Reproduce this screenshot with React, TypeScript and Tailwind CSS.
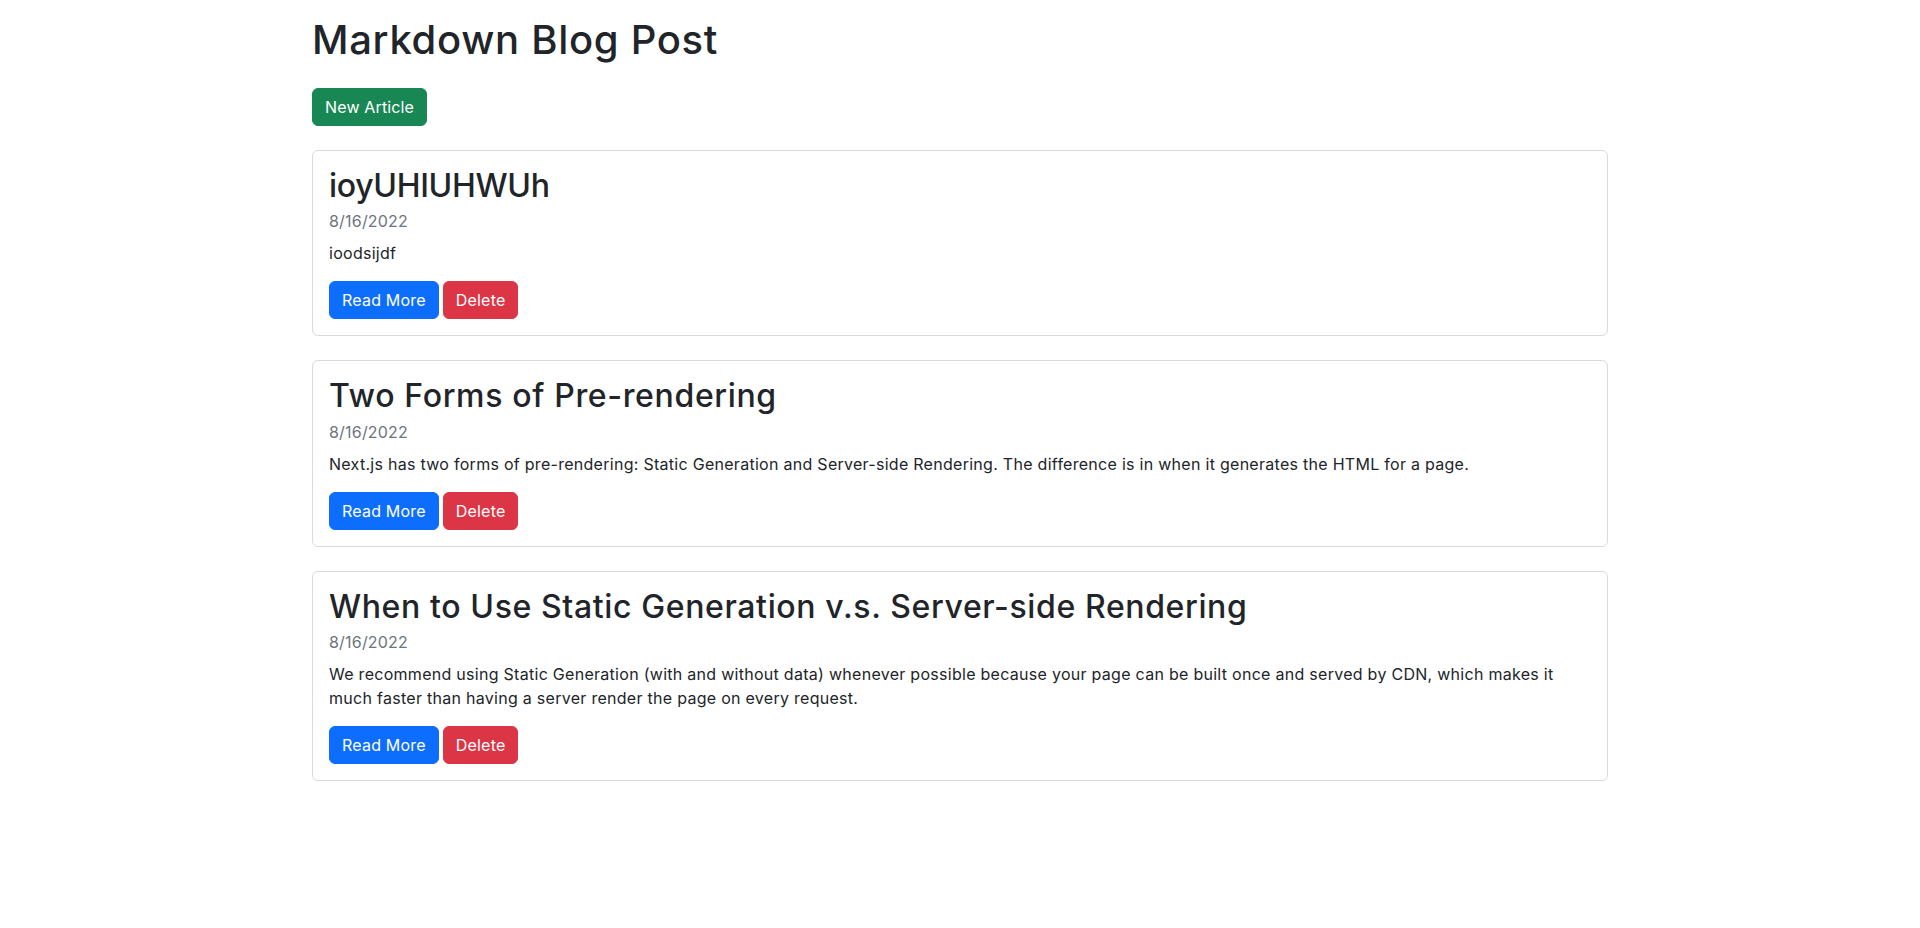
import React from "react";

const posts = [
  {
    title: "ioyUHIUHWUh",
    titleClass: "tracking-[-0.3px]",
    date: "8/16/2022",
    text: "ioodsijdf",
  },
  {
    title: "Two Forms of Pre-rendering",
    titleClass: "tracking-[0.65px]",
    date: "8/16/2022",
    text: "Next.js has two forms of pre-rendering: Static Generation and Server-side Rendering. The difference is in when it generates the HTML for a page.",
  },
  {
    title: "When to Use Static Generation v.s. Server-side Rendering",
    titleClass: "tracking-[0.62px]",
    date: "8/16/2022",
    text: "We recommend using Static Generation (with and without data) whenever possible because your page can be built once and served by CDN, which makes it much faster than having a server render the page on every request.",
  },
];

export default function App() {
  return (
    <div
      className="min-h-screen bg-white text-[#212529]"
      style={{ fontFamily: "Inter, 'DejaVu Sans', sans-serif" }}
    >
      <div className="mx-auto max-w-[1320px] px-3 pt-4">
        <h1 className="mb-6 text-[40px] font-medium leading-[1.2] tracking-[0.7px]">
          Markdown Blog Post
        </h1>
        <button className="mb-6 rounded-md border border-[#198754] bg-[#198754] px-3 py-[6px] text-base leading-6 text-white tracking-[0.15px]">
          New Article
        </button>
        {posts.map((p) => (
          <div
            key={p.title}
            className="mb-6 rounded-md border border-[#d9dadb] bg-white p-4"
          >
            <h2 className={"mb-2 text-[32px] font-medium leading-[1.2] " + p.titleClass}>
              {p.title}
            </h2>
            <div className="-mt-1 mb-2 text-base leading-6 text-[#6c757d] tracking-[0.2px]">
              {p.date}
            </div>
            <p className="mb-4 text-base leading-6 tracking-[0.28px]">{p.text}</p>
            <div className="flex gap-1">
              <button className="rounded-md border border-[#0d6efd] bg-[#0d6efd] px-3 py-[6px] text-base leading-6 text-white tracking-[0.2px]">
                Read More
              </button>
              <button className="rounded-md border border-[#dc3545] bg-[#dc3545] px-3 py-[6px] text-base leading-6 text-white tracking-[0.2px]">
                Delete
              </button>
            </div>
          </div>
        ))}
      </div>
    </div>
  );
}
